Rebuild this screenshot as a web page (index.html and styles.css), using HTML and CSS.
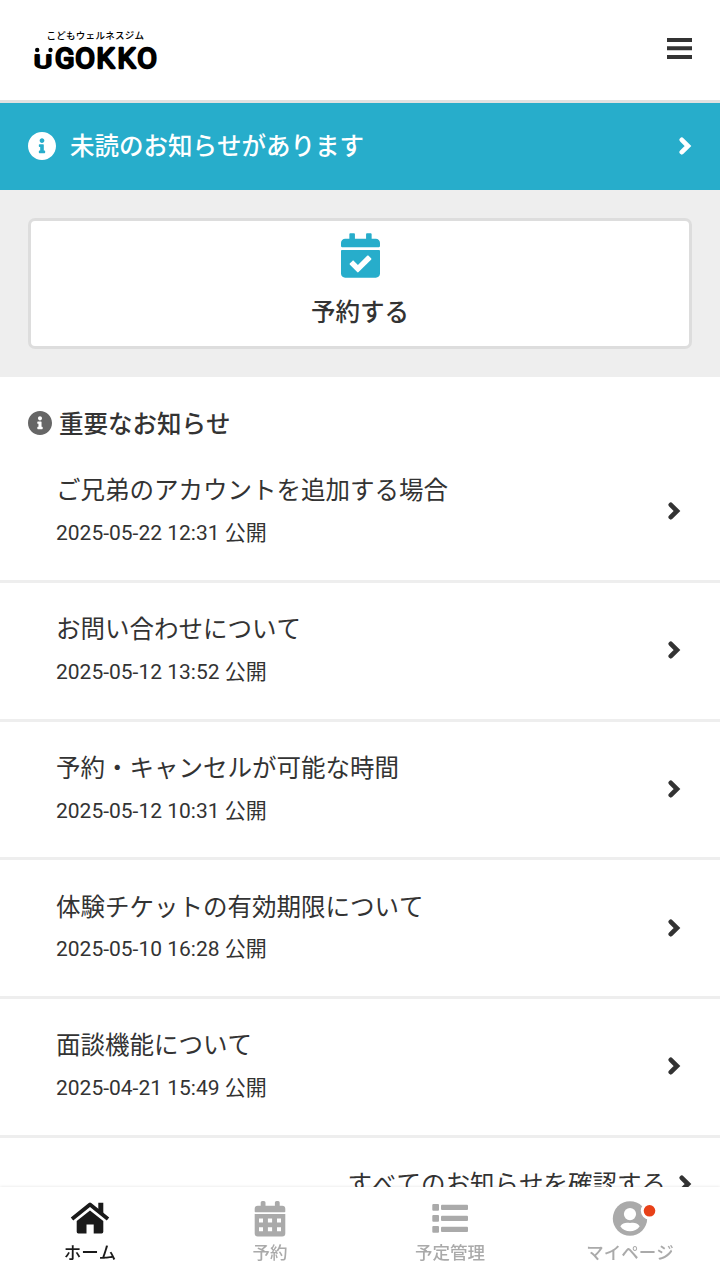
FILE: index.html
```html
<!DOCTYPE html>
<html lang="ja">
<head>
<meta charset="utf-8">
<meta name="viewport" content="width=device-width">
<title>UGOKKO</title>
<link rel="stylesheet" href="styles.css">
</head>
<body>
<svg class="defs" aria-hidden="true">
  <symbol id="info" viewBox="8 8 496 496"><path d="M256 8C119.043 8 8 119.083 8 256c0 136.997 111.043 248 248 248s248-111.003 248-248C504 119.083 392.957 8 256 8zm0 110c23.196 0 42 18.804 42 42s-18.804 42-42 42-42-18.804-42-42 18.804-42 42-42zm56 254c0 6.627-5.373 12-12 12h-88c-6.627 0-12-5.373-12-12v-24c0-6.627 5.373-12 12-12h12v-64h-12c-6.627 0-12-5.373-12-12v-24c0-6.627 5.373-12 12-12h64c6.627 0 12 5.373 12 12v100h12c6.627 0 12 5.373 12 12v24z"/></symbol>
  <symbol id="chevron" viewBox="0 0 13 18"><path d="M2.8 2.8L9 9l-6.2 6.2" fill="none" stroke="currentColor" stroke-width="4.7" stroke-linecap="round"/></symbol>
</svg>
<div class="screen">
  <header class="header">
    <svg class="logo" viewBox="0 0 130 44" role="img" aria-label="こどもウェルネスジム UGOKKO">
      <text class="logo-sub" x="17.5" y="11.2" textLength="97.5">こどもウェルネスジム</text>
      <circle cx="8.2" cy="22" r="2.2"/><circle cx="21.5" cy="22" r="2.2"/>
      <text class="logo-u" transform="translate(5.1 39.7) scale(1.5 1)">U</text>
      <text class="logo-main" transform="translate(25.9 39.7) scale(1.06 1)" x="0 19.1 39.2 59 77.8">GOKKO</text>
    </svg>
    <svg class="menu" viewBox="0 0 25 22"><path d="M0 2h25M0 10.2h25M0 19h25" stroke="#333" stroke-width="4"/></svg>
  </header>

  <a class="banner">
    <svg class="banner-icon"><use href="#info"/></svg>
    <span class="banner-text">未読のお知らせがあります</span>
    <svg class="chevron"><use href="#chevron"/></svg>
  </a>

  <section class="actions">
    <a class="reserve">
      <svg class="reserve-icon" viewBox="0 0 448 512"><path d="M436 160H12c-6.627 0-12-5.373-12-12v-36c0-26.51 21.49-48 48-48h48V12c0-6.627 5.373-12 12-12h40c6.627 0 12 5.373 12 12v52h128V12c0-6.627 5.373-12 12-12h40c6.627 0 12 5.373 12 12v52h48c26.51 0 48 21.49 48 48v36c0 6.627-5.373 12-12 12zM12 192h424c6.627 0 12 5.373 12 12v260c0 26.51-21.49 48-48 48H48c-26.51 0-48-21.49-48-48V204c0-6.627 5.373-12 12-12zm333.296 95.947l-28.169-28.398c-4.667-4.705-12.265-4.736-16.97-.068L194.12 364.665l-45.98-46.352c-4.667-4.705-12.266-4.736-16.971-.068l-28.397 28.17c-4.705 4.667-4.736 12.265-.068 16.97l82.601 83.269c4.667 4.705 12.265 4.736 16.97.068l142.953-141.805c4.705-4.667 4.736-12.265.068-16.97z"/></svg>
      <span>予約する</span>
    </a>
  </section>

  <main>
    <h2 class="section-title"><svg class="section-icon"><use href="#info"/></svg><span>重要なお知らせ</span></h2>
    <ul class="news">
      <li class="item"><div><p class="title">ご兄弟のアカウントを追加する場合</p><p class="date">2025-05-22 12:31 公開</p></div><svg class="chevron"><use href="#chevron"/></svg></li>
      <li class="item"><div><p class="title">お問い合わせについて</p><p class="date">2025-05-12 13:52 公開</p></div><svg class="chevron"><use href="#chevron"/></svg></li>
      <li class="item"><div><p class="title">予約・キャンセルが可能な時間</p><p class="date">2025-05-12 10:31 公開</p></div><svg class="chevron"><use href="#chevron"/></svg></li>
      <li class="item"><div><p class="title">体験チケットの有効期限について</p><p class="date">2025-05-10 16:28 公開</p></div><svg class="chevron"><use href="#chevron"/></svg></li>
      <li class="item"><div><p class="title">面談機能について</p><p class="date">2025-04-21 15:49 公開</p></div><svg class="chevron"><use href="#chevron"/></svg></li>
    </ul>
    <a class="more"><span>すべてのお知らせを確認する</span><svg class="chevron"><use href="#chevron"/></svg></a>
  </main>
</div>

<nav class="tabs">
  <a class="tab active">
    <svg class="tab-icon" viewBox="0 0 40 36"><path d="M2 18L20 3.6 38 18" fill="none" stroke="currentColor" stroke-width="3.9" stroke-linejoin="round"/><path d="M28.3 1.7h5v13l-5-4z"/><path d="M20 9.4L33.3 20v10.8q0 1.6-1.6 1.6h-8v-8.8h-7.2v8.8H8.3q-1.6 0-1.6-1.6V20z"/></svg>
    <span>ホーム</span>
  </a>
  <a class="tab">
    <svg class="tab-icon" viewBox="0 0 40 36"><path d="M12.3 0h1.6q1.6 0 1.6 1.6v3.2h9.4V1.6q0-1.6 1.6-1.6h1.6q1.6 0 1.6 1.6v3.2h2.5q3.1 0 3.1 3v2.6q0 .8-.8.8H5.5q-.8 0-.8-.8V7.8q0-3 3.1-3h2.9V1.6q0-1.600 1.6-1.6z"/><path fill-rule="evenodd" d="M4.7 13h30.6v19.500q0 3-3.1 3H7.8q-3.1 0-3.1-3zM9 17.4h4v4H9zm8.900 0h4.200v4h-4.200zm9.100 0h4v4h-4zM9 26.200h4v4H9zm8.900 0h4.200v4h-4.200zm9.100 0h4v4h-4z"/></svg>
    <span>予約</span>
  </a>
  <a class="tab">
    <svg class="tab-icon" viewBox="0 0 40 36"><rect x="2.3" y="3" width="6.7" height="6.7" rx="1"/><rect x="2.3" y="14" width="6.7" height="6.7" rx="1"/><rect x="2.3" y="25" width="6.7" height="6.7" rx="1"/><rect x="11" y="3.7" width="27" height="5.2" rx="1"/><rect x="11" y="14.7" width="27" height="5.2" rx="1"/><rect x="11" y="25.7" width="27" height="5.2" rx="1"/></svg>
    <span>予定管理</span>
  </a>
  <a class="tab">
    <svg class="tab-icon" viewBox="0 0 40 36"><circle cx="20" cy="17.5" r="17.2"/><circle cx="20" cy="13.1" r="6.1" fill="#fff"/><path d="M10.3 25.3C13 21.5 16 21.4 20 22c4-.6 7-.5 9.7 3.3-2 3.3-6 5-9.7 5s-7.700-1.700-9.700-5z" fill="#fff"/><circle cx="39.5" cy="9.8" r="8.7" fill="#fff"/><circle cx="39.5" cy="9.8" r="5.8" fill="#e84118"/></svg>
    <span>マイページ</span>
  </a>
</nav>
</body>
</html>
```
FILE: styles.css
```css
* { box-sizing: border-box; }
body {
  margin: 0;
  color: #333;
  background: #fff;
  font: 24.5px/36.75px Roboto, "Noto Sans CJK JP", sans-serif;
  font-kerning: none;
}
h2, p, ul { margin: 0; padding: 0; list-style: none; }
svg { display: block; flex: none; fill: currentColor; overflow: visible; }
.defs { position: absolute; width: 0; height: 0; }
.screen { height: 1273px; overflow: hidden; }
.header {
  display: flex;
  justify-content: space-between;
  align-items: flex-start;
  height: 103px;
  padding: 28px 28px 0 29px;
  border-bottom: 3px solid #e1e1e1;
}
.logo { width: 130px; height: 44px; color: #000; }
.logo-sub { font: 500 9.5px "Noto Sans CJK JP", sans-serif; }
.logo-main, .logo-u { font: 400 27px Roboto, sans-serif; stroke: #000; stroke-width: 2.4px; stroke-linejoin: round; }
.logo-u { font-size: 18.4px; vector-effect: non-scaling-stroke; }
.menu { width: 25px; height: 22px; margin-top: 10px; }
.chevron { width: 13px; height: 18px; }
.banner {
  display: flex;
  align-items: center;
  height: 87px;
  padding: 0 28px 2px;
  background: #27adcb;
  color: #fff;
  font-weight: 500;
}
.banner-icon { width: 28px; height: 28px; margin-right: 14px; }
.banner-text { flex: 1; padding-top: 4px; }
.actions { height: 187px; padding: 28px; background: #eee; }
.reserve {
  display: flex;
  flex-direction: column;
  align-items: center;
  height: 131px;
  padding-top: 12px;
  border: 3px solid #ddd;
  border-radius: 7px;
  background: #fff;
  font-weight: 500;
}
.reserve-icon { width: 39px; height: 45px; margin: 0 0 17px; color: #27adcb; }
.section-title {
  display: flex;
  align-items: center;
  height: 67px;
  padding: 28px 28px 2.25px;
  font-size: 24.5px;
  font-weight: 500;
}
.section-title span { padding-top: 4px; }
.section-icon { width: 24px; height: 24px; margin-right: 7px; color: #666; }
.item {
  display: flex;
  justify-content: space-between;
  align-items: center;
  height: 138.75px;
  padding: 0 39px 1px 56px;
  border-bottom: 3px solid #eee;
}
.item > div { margin-top: 0; }
.date { margin-top: 8px; font-size: 21px; line-height: 31.5px; }
.more {
  display: flex;
  justify-content: flex-end;
  align-items: center;
  gap: 13px;
  padding: 26px 28px 0;
}
.more span { padding-top: 3px; }
.tabs {
  position: fixed;
  right: 0;
  bottom: 0;
  left: 0;
  display: grid;
  grid-template-columns: repeat(4, 1fr);
  height: 86px;
  padding-top: 13.5px;
  background: #fff;
  box-shadow: 0 0 3px rgba(0, 0, 0, .12);
}
.tab {
  display: flex;
  flex-direction: column;
  align-items: center;
  gap: 3.5px;
  color: #aaa;
  font-size: 17.5px;
  font-weight: 500;
  line-height: 26px;
}
.tab.active { color: #1a1a1a; }
.tab-icon { width: 40px; height: 36px; }
```
